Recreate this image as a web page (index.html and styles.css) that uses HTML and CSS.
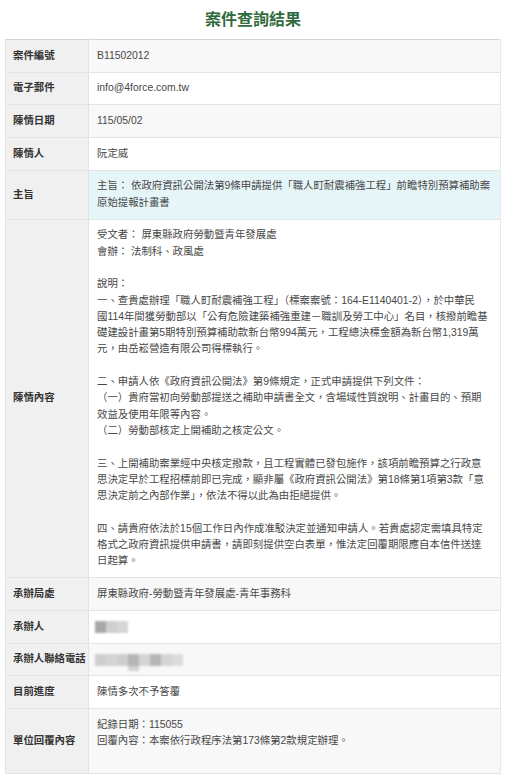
FILE: index.html
```html
<!DOCTYPE html>
<html lang="zh-Hant">
<head>
<meta charset="utf-8">
<title>案件查詢結果</title>
<link rel="stylesheet" href="styles.css">
</head>
<body>
<div class="page">
  <h1 class="title">案件查詢結果</h1>
  <table class="case">
    <colgroup><col class="col-label"><col class="col-value"></colgroup>
    <tbody>
      <tr class="odd"><th>案件編號</th><td>B11502012</td></tr>
      <tr class="even"><th>電子郵件</th><td>info@4force.com.tw</td></tr>
      <tr class="odd"><th>陳情日期</th><td>115/05/02</td></tr>
      <tr class="even"><th>陳情人</th><td>阮定威</td></tr>
      <tr class="hl"><th>主旨</th><td>主旨： 依政府資訊公開法第9條申請提供「職人町耐震補強工程」前瞻特別預算補助案<br>原始提報計畫書</td></tr>
      <tr class="even"><th>陳情內容</th><td>受文者： 屏東縣政府勞動暨青年發展處<br>會辦： 法制科、政風處<br><br>說明：<br>一、查貴處辦理「職人町耐震補強工程」（標案案號：164-E1140401-2），於中華民<br>國114年間獲勞動部以「公有危險建築補強重建－職訓及勞工中心」名目，核撥前瞻基<br>礎建設計畫第5期特別預算補助款新台幣994萬元，工程總決標金額為新台幣1,319萬<br>元，由岳崧營造有限公司得標執行。<br><br>二、申請人依《政府資訊公開法》第9條規定，正式申請提供下列文件：<br>（一）貴府當初向勞動部提送之補助申請書全文，含場域性質說明、計畫目的、預期<br>效益及使用年限等內容。<br>（二）勞動部核定上開補助之核定公文。<br><br>三、上開補助案業經中央核定撥款，且工程實體已發包施作，該項前瞻預算之行政意<br>思決定早於工程招標前即已完成，顯非屬《政府資訊公開法》第18條第1項第3款「意<br>思決定前之內部作業」，依法不得以此為由拒絕提供。<br><br>四、請貴府依法於15個工作日內作成准駁決定並通知申請人。若貴處認定需填具特定<br>格式之政府資訊提供申請書，請即刻提供空白表單，惟法定回覆期限應自本信件送達<br>日起算。</td></tr>
      <tr class="odd"><th>承辦局處</th><td>屏東縣政府-勞動暨青年發展處-青年事務科</td></tr>
      <tr class="even"><th>承辦人</th><td><span class="redact"><i class="b1"></i><i class="b3"></i><i class="b4"></i></span></td></tr>
      <tr class="odd"><th>承辦人聯絡電話</th><td><span class="redact"><i class="b3"></i><i class="b4"></i><i class="b3"></i><i class="b2 drop"></i><i class="b4"></i><i class="b2"></i><i class="b4"></i><i class="b5"></i></span></td></tr>
      <tr class="even"><th>目前進度</th><td>陳情多次不予答覆</td></tr>
      <tr class="odd"><th>單位回覆內容</th><td>紀錄日期：115055<br>回覆內容：本案依行政程序法第173條第2款規定辦理。<br>&nbsp;</td></tr>
    </tbody>
  </table>
</div>
</body>
</html>
```

FILE: styles.css
```css
html, body {
  margin: 0;
  padding: 0;
  background: #ffffff;
}

body {
  font-family: "Liberation Sans", Arial, "Noto Sans CJK TC", sans-serif;
  color: #444;
}

.page {
  width: 496px;
  margin-left: 5px;
}

.title {
  margin: 0;
  padding-top: 10px;
  margin-bottom: 9px;
  font-size: 16px;
  line-height: 20px;
  font-weight: bold;
  color: #2f6b3c;
  text-align: center;
  letter-spacing: 0;
}

.case {
  width: 496px;
  border-collapse: collapse;
  font-size: 10.4px;
  line-height: 16.3px;
  border-top: 1px solid #d4d4d4;
  border-left: 1px solid #e2e2e2;
  border-right: 1px solid #e8e8e8;
  border-bottom: 1px solid #dcdcdc;
}

.col-label { width: 83px; }

.case th,
.case td {
  padding: 7.7px 3px 7.7px 8px;
  border-bottom: 1px solid #e4e4e4;
}

.case th {
  background: #f0f0f0;
  color: #333;
  font-weight: bold;
  text-align: left;
  white-space: nowrap;
  vertical-align: middle;
  padding-left: 7px;
  padding-right: 1px;
  border-right: 1px solid #e2e2e2;
}

.case td {
  color: #474747;
  vertical-align: top;
  white-space: nowrap;
  padding-left: 8px;
}

.odd td { background: #f8f8f8; }
.even td { background: #ffffff; }
.hl td { background: #e6f6f8; }

.redact {
  display: inline-flex;
  vertical-align: middle;
  margin-left: -2px;
  filter: blur(0.8px);
  position: relative;
}

.redact i {
  display: block;
  width: 11px;
  height: 12px;
}

.redact .b1 { background: #a8a8a8; }
.redact .b2 { background: #b6b6b6; }
.redact .b3 { background: #cfcfcf; }
.redact .b4 { background: #d5d5d5; }
.redact .b5 { background: #dcdcdc; }
.redact .drop { box-shadow: 0 5px 0 #d2d2d2; }
```
